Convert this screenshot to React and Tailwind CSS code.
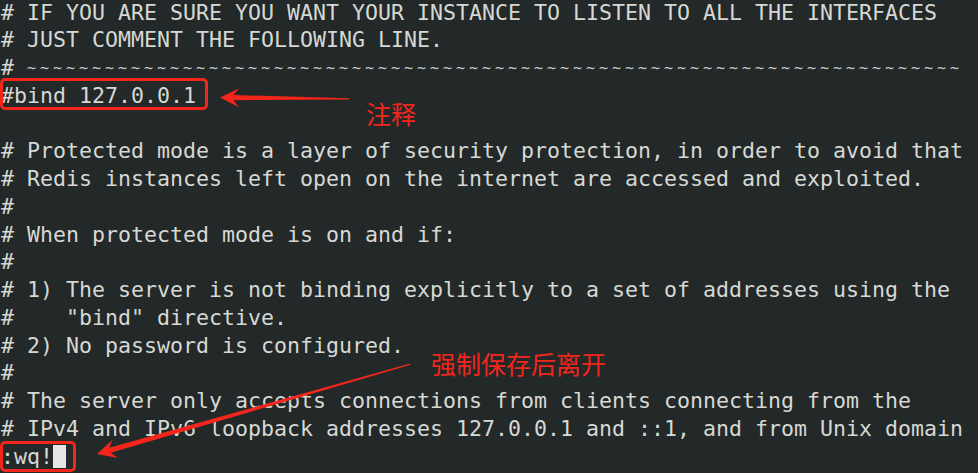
import React from "react";

const lines = [
  "# IF YOU ARE SURE YOU WANT YOUR INSTANCE TO LISTEN TO ALL THE INTERFACES",
  "# JUST COMMENT THE FOLLOWING LINE.",
  "TILDES",
  "#bind 127.0.0.1",
  "",
  "# Protected mode is a layer of security protection, in order to avoid that",
  "# Redis instances left open on the internet are accessed and exploited.",
  "#",
  "# When protected mode is on and if:",
  "#",
  "# 1) The server is not binding explicitly to a set of addresses using the",
  '#    "bind" directive.',
  "# 2) No password is configured.",
  "#",
  "# The server only accepts connections from clients connecting from the",
  "# IPv4 and IPv6 loopback addresses 127.0.0.1 and ::1, and from Unix domain",
];

const Arrow = ({ length }) => (
  <polygon
    points={`0,0 19,-9.5 13.5,-2.6 ${length},-0.7 ${length},0.7 13.5,2.6 19,9.5`}
    fill="#f4261b"
  />
);

export default function App() {
  return (
    <div className="relative h-[473px] w-full overflow-hidden bg-[#232829]">
      <div className="-mt-[1.5px] pl-[1px] font-['DejaVu_Sans_Mono',monospace] text-[21.6px] leading-[27.77px] text-[#d6d8d3]">
        {lines.map((line, i) =>
          line === "TILDES" ? (
            <div key={i} className="h-[27.77px] whitespace-pre">
              {"# "}
              <span className="align-[2px] text-[15px] tracking-[3.97px] text-[#c9cbc7]">
                {"~".repeat(72)}
              </span>
            </div>
          ) : (
            <div key={i} className="h-[27.77px] whitespace-pre">
              {line}
            </div>
          )
        )}
        <div className="flex h-[27.77px] items-center whitespace-pre">
          <span>:wq!</span>
          <span className="h-[23px] w-[13px] bg-[#e6e6e4]"></span>
        </div>
      </div>

      {/* annotation boxes */}
      <div className="absolute left-0 top-[78px] h-[32px] w-[208px] rounded-[5px] border-[3px] border-[#f4261b]"></div>
      <div className="absolute left-0 top-[441px] h-[31px] w-[76px] rounded-[5px] border-[3px] border-[#f4261b]"></div>

      {/* arrows */}
      <svg className="absolute left-0 top-0" width="978" height="473">
        <g transform="translate(220,97.5) rotate(0.6)">
          <Arrow length={129} />
        </g>
        <g transform="translate(97,454) rotate(-16)">
          <Arrow length={326} />
        </g>
      </svg>

      {/* labels */}
      <div className="absolute left-[366px] top-[98px] font-['Noto_Sans_CJK_SC',sans-serif] text-[25px] leading-[30px] text-[#f4261b]">
        注释
      </div>
      <div className="absolute left-[431px] top-[348px] font-['Noto_Sans_CJK_SC',sans-serif] text-[25px] leading-[30px] text-[#f4261b]">
        强制保存后离开
      </div>
    </div>
  );
}
